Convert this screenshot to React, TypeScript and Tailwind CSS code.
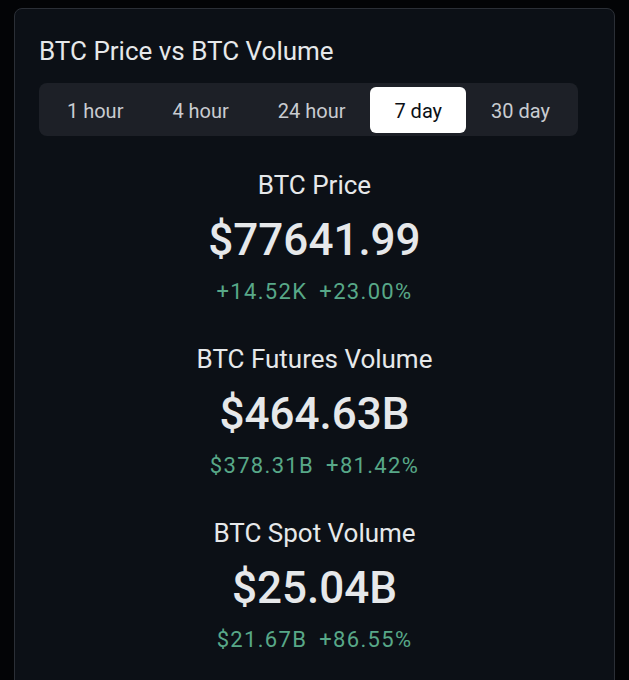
const tabs = ["1 hour", "4 hour", "24 hour", "7 day", "30 day"];

const stats = [
  { label: "BTC Price", value: "$77641.99", changes: ["+14.52K", "+23.00%"] },
  { label: "BTC Futures Volume", value: "$464.63B", changes: ["$378.31B", "+81.42%"] },
  { label: "BTC Spot Volume", value: "$25.04B", changes: ["$21.67B", "+86.55%"] },
];

export default function App() {
  return (
    <div className="h-[680px] w-[629px] overflow-hidden bg-[#030406] pt-2 pl-[14px] font-['Roboto',sans-serif]">
      <div className="h-[700px] w-[601px] rounded-lg border border-[#2b2f36] bg-[#0c1016] px-[24px] pt-[26px]">
        <h2 className="text-[26px] leading-[32px] text-[#e6e8ea]">BTC Price vs BTC Volume</h2>

        <div className="mt-[16px] flex h-[53px] w-[539px] items-center justify-between rounded-lg bg-[#1d2027] px-1">
          {tabs.map((tab) => (
            <button
              key={tab}
              className={`flex h-[46px] items-center rounded-md px-6 pt-[2px] text-[20px] ${
                tab === "7 day" ? "bg-white text-[#0c1016]" : "text-[#c9ccd1]"
              }`}
            >
              {tab}
            </button>
          ))}
        </div>

        <div className="mt-[33px] flex flex-col items-center gap-[37px]">
          {stats.map((s) => (
            <div key={s.label} className="flex flex-col items-center">
              <span className="text-[26px] leading-[32px] text-[#e6e8ea]">{s.label}</span>
              <span className="mt-[13px] text-[44px] leading-[52px] font-medium text-[#e6e8ea]">{s.value}</span>
              <div className="mt-[12px] flex gap-[12px] text-[22px] leading-[28px] tracking-[0.06em] text-[#58a888]">
                {s.changes.map((c) => (
                  <span key={c}>{c}</span>
                ))}
              </div>
            </div>
          ))}
        </div>
      </div>
    </div>
  );
}
